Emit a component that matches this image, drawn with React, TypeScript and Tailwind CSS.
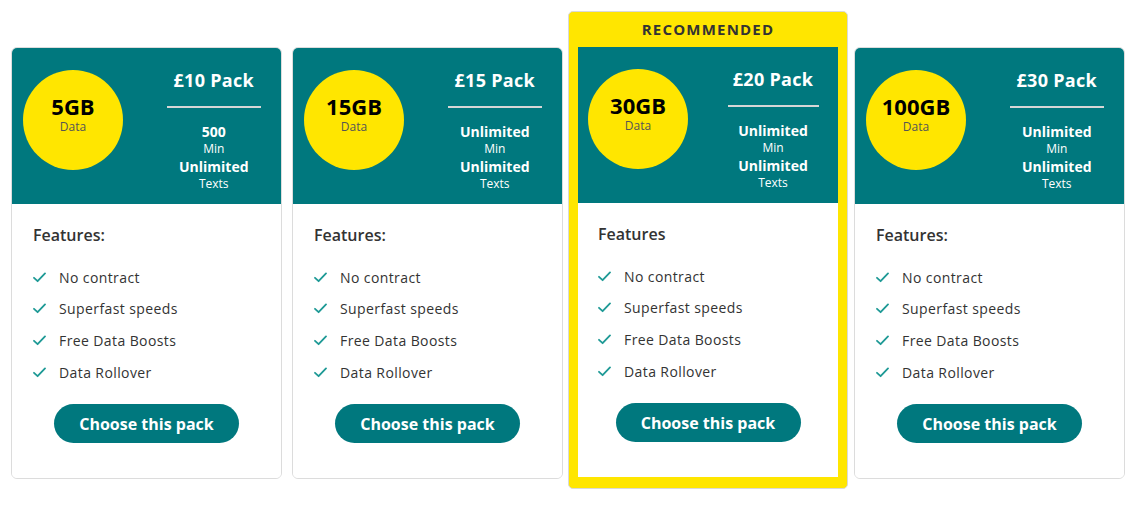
import React from 'react';

interface Pack {
  data: string;
  price: string;
  mins: string;
  texts: string;
  recommended?: boolean;
}

const packs: Pack[] = [
  { data: '5GB', price: '£10 Pack', mins: '500', texts: 'Unlimited' },
  { data: '15GB', price: '£15 Pack', mins: 'Unlimited', texts: 'Unlimited' },
  { data: '30GB', price: '£20 Pack', mins: 'Unlimited', texts: 'Unlimited', recommended: true },
  { data: '100GB', price: '£30 Pack', mins: 'Unlimited', texts: 'Unlimited' },
];

const features = ['No contract', 'Superfast speeds', 'Free Data Boosts', 'Data Rollover'];

const Check = () => (
  <svg width="13" height="11" viewBox="0 0 13 11" fill="none" className="shrink-0">
    <path d="M1 5.8 L4.6 9.2 L12 1.4" stroke="#1f9a96" strokeWidth="1.8" strokeLinecap="round" strokeLinejoin="round" />
  </svg>
);

const PackBody: React.FC<{ pack: Pack }> = ({ pack }) => {
  return (
    <>
      <div className="grid grid-cols-2 h-[156px] bg-[#00787e] pt-[22px]">
        <div className={pack.recommended ? 'pl-[10px]' : 'pl-[11px]'}>
          <div className="w-[100px] h-[100px] rounded-full bg-[#ffe600] flex flex-col items-center justify-center pb-[11px]">
            <span className="text-[22px] leading-[22px] font-bold text-black">{pack.data}</span>
            <span className="text-[12px] leading-[14px] mt-[3px] text-[#555]">Data</span>
          </div>
        </div>
        <div className="flex flex-col items-center text-white">
          <span className="text-[18px] leading-[24px] font-bold tracking-[0.3px] -mt-[2px]">{pack.price}</span>
          <div className="w-[70%] h-[2px] bg-[#d6d6d6] mt-[14px]" />
          <span className="text-[14px] leading-[19px] font-bold mt-[14px]">{pack.mins}</span>
          <span className="text-[12px] leading-[16px]">Min</span>
          <span className="text-[14px] leading-[19px] font-bold">{pack.texts}</span>
          <span className="text-[12px] leading-[16px]">Texts</span>
        </div>
      </div>
      <div className={`bg-white pt-[19px] pb-[35px] ${pack.recommended ? 'pl-[20px]' : 'pl-[21px]'}`}>
        <h3 className="text-[16px] leading-[24px] font-semibold text-[#333]">
          {pack.recommended ? 'Features' : 'Features:'}
        </h3>
        <ul className="mt-[18px] flex flex-col gap-[7.7px]">
          {features.map((f) => (
            <li key={f} className="flex items-center h-[24px] text-[14px] text-[#333] tracking-[0.4px]">
              <Check />
              <span className="ml-[13px]">{f}</span>
            </li>
          ))}
        </ul>
        <div className={`flex justify-center mt-[20px] ${pack.recommended ? 'pr-[20px]' : 'pr-[21px]'}`}>
          <button className="w-[185px] h-[39px] rounded-full bg-[#00787e] text-white text-[16px] font-bold">
            Choose this pack
          </button>
        </div>
      </div>
    </>
  );
};

export default function App() {
  return (
    <div
      className="flex items-start pl-[11px] pt-[11px] bg-white min-h-[510px]"
      style={{ fontFamily: '"Open Sans", Arial, sans-serif' }}
    >
      {packs.map((pack, i) => {
        const ml = i === 0 ? '' : i === 1 ? 'ml-[10px]' : i === 2 ? 'ml-[5px]' : 'ml-[6px]';
        if (pack.recommended) {
          return (
            <div
              key={pack.price}
              className={`${ml} w-[280px] rounded-[5px] border border-[#d9d9d9] bg-[#ffe600] px-[9px] pb-[11px]`}
            >
              <div className="h-[35px] flex items-center justify-center text-[15px] font-bold text-[#333] tracking-[1.2px]">
                RECOMMENDED
              </div>
              <PackBody pack={pack} />
            </div>
          );
        }
        return (
          <div
            key={pack.price}
            className={`${ml} mt-[36px] w-[271px] rounded-[6px] border border-[#dcdcdc] overflow-hidden bg-white`}
          >
            <PackBody pack={pack} />
          </div>
        );
      })}
    </div>
  );
}
